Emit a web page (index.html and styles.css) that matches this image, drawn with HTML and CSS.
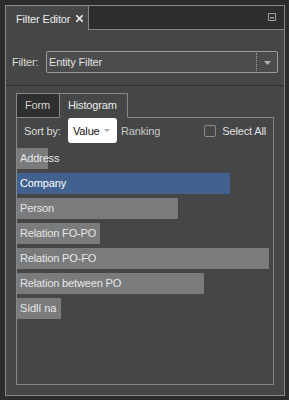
FILE: index.html
```
<!DOCTYPE html>
<html>
<head>
<meta charset="utf-8">
<link rel="stylesheet" href="styles.css">
</head>
<body>
<div class="panel">
  <div class="header">
    <div class="title-tab">
      <span class="title">Filter Editor</span>
      <svg class="close" width="7" height="7" viewBox="0 0 7 7"><path d="M0.8 0.8 L6.2 6.2 M6.2 0.8 L0.8 6.2" stroke="#e2e2e2" stroke-width="1.8" stroke-linecap="square"/></svg>
    </div>
    <div class="header-rest">
      <svg class="minimize" width="8" height="8" viewBox="0 0 8 8"><rect x="0.5" y="0.5" width="7" height="7" fill="none" stroke="#9c9c9c"/><rect x="2" y="4" width="4" height="1.5" fill="#9c9c9c"/></svg>
    </div>
  </div>
  <div class="filter-row">
    <span class="filter-label">Filter:</span>
    <div class="combo">
      <span class="combo-text">Entity Filter</span>
      <div class="combo-btn"><svg width="7" height="4" viewBox="0 0 7 4"><path d="M0 0 H7 L3.5 4 Z" fill="#b4b4b4"/></svg></div>
    </div>
  </div>
  <div class="sep"></div>
  <div class="tabs">
    <div class="tab">Form</div>
    <div class="tab active">Histogram</div>
  </div>
  <div class="tab-body">
    <div class="sort-row">
      <span class="sort-label">Sort by:</span>
      <div class="value-box"><span>Value</span><svg width="6" height="3" viewBox="0 0 6 3"><path d="M0 0 H6 L3 3 Z" fill="#a8a8a8"/></svg></div>
      <span class="ranking">Ranking</span>
      <span class="checkbox"></span>
      <span class="select-all">Select All</span>
    </div>
    <div class="bars">
      <div class="bar"><div class="fill" style="width:31px"></div><span class="label">Address</span></div>
      <div class="bar sel"><div class="fill" style="width:213px"></div><span class="label">Company</span></div>
      <div class="bar"><div class="fill" style="width:161px"></div><span class="label">Person</span></div>
      <div class="bar"><div class="fill" style="width:83px"></div><span class="label">Relation FO-PO</span></div>
      <div class="bar"><div class="fill" style="width:252px"></div><span class="label">Relation PO-FO</span></div>
      <div class="bar"><div class="fill" style="width:187px"></div><span class="label">Relation between PO</span></div>
      <div class="bar"><div class="fill" style="width:44px"></div><span class="label">Sídlí na</span></div>
    </div>
  </div>
</div>
</body>
</html>
```
FILE: styles.css
```
* { box-sizing: border-box; }
body {
  margin: 0;
  background: #2b2c2e;
  font-family: "Liberation Sans", Arial, sans-serif;
  font-size: 11px;
  letter-spacing: -0.15px;
  color: #dcdcd6;
}
.panel {
  margin: 5px 0 0 5px;
  width: 280px;
  height: 391px;
  border: 1px solid #87888a;
  background: #454648;
  display: flex;
  flex-direction: column;
}
.header {
  display: flex;
  height: 24px;
}
.title-tab {
  width: 83px;
  border-right: 1px solid #87888a;
  display: flex;
  align-items: center;
  padding-left: 10px;
  padding-top: 1px;
}
.title { color: #ececec; }
.close { margin-left: 6px; }
.header-rest {
  flex: 1;
  background: #2d2e30;
  border-bottom: 1px solid #87888a;
  display: flex;
  justify-content: flex-end;
  align-items: flex-start;
  padding-right: 8px;
  padding-top: 7px;
}
.filter-row {
  display: flex;
  align-items: center;
  padding: 21px 6px 12px 6px;
}
.filter-label { width: 34px; }
.combo {
  flex: 1;
  height: 22px;
  border: 1px solid #9a9b9c;
  border-radius: 2px;
  background: #4b4c4e;
  display: flex;
  align-items: center;
}
.combo-text { flex: 1; padding-left: 2px; color: #e2e2e2; }
.combo-btn {
  width: 21px;
  height: 18px;
  border-left: 1px dotted #a0a0a0;
  display: flex;
  align-items: center;
  justify-content: center;
  padding-top: 1px;
}
.sep { height: 1px; background: #2e2f31; }
.tabs {
  position: relative;
  display: flex;
  margin: 7px 0 -1px 10px;
  height: 25px;
}
.tab {
  height: 25px;
  line-height: 23px;
  border: 1px solid #87888a;
  padding-left: 8px;
}
.tab:first-child {
  width: 43px;
  border-right: none;
  background: #2e2f31;
  color: #d4d4cc;
}
.tab.active {
  width: 69px;
  background: #454648;
  border-bottom-color: #454648;
  color: #ececec;
}
.tab-body {
  flex: 1;
  margin: 0 10px 10px 10px;
  border: 1px solid #87888a;
}
.sort-row {
  display: flex;
  align-items: center;
  height: 25px;
  padding: 0 7px 0 7px;
}
.sort-label { width: 44px; }
.value-box {
  width: 49px;
  height: 25px;
  background: #ffffff;
  border-radius: 3px;
  color: #111;
  display: flex;
  align-items: center;
  padding-left: 5px;
}
.value-box span { width: 31px; }
.ranking { margin-left: 4px; color: #c8c8c4; }
.checkbox {
  margin-left: auto;
  width: 12px;
  height: 12px;
  border: 1px solid #8c8c8c;
  border-radius: 2px;
}
.select-all { margin-left: 6px; color: #e0e0e0; }
.bars {
  display: flex;
  flex-direction: column;
  gap: 4px;
  margin-top: 5px;
}
.bar {
  position: relative;
  height: 21px;
}
.fill {
  height: 100%;
  background: #7a7b7c;
}
.bar.sel .fill { background: #41628f; }
.label {
  position: absolute;
  left: 3px;
  top: 0;
  line-height: 21px;
  color: #e8e8e8;
  white-space: nowrap;
}
.bar.sel .label { color: #ffffff; }
```
